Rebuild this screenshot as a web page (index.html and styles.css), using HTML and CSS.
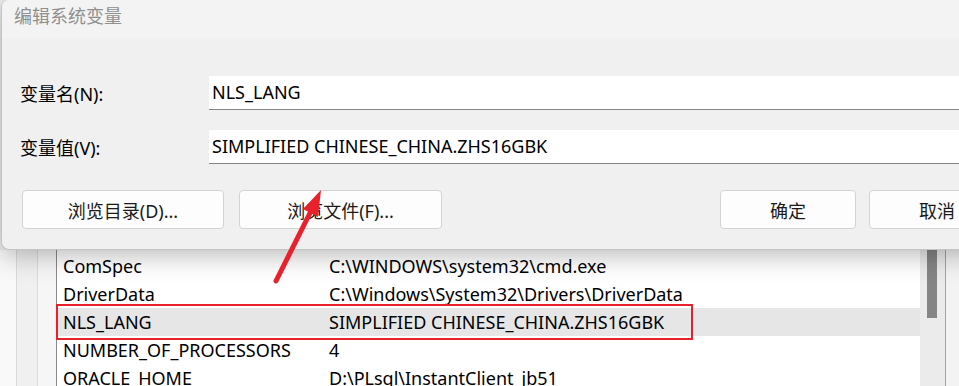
FILE: index.html
```html
<!DOCTYPE html>
<html>
<head>
    <title>编辑系统变量</title>
    <link rel="stylesheet" href="styles.css">
</head>
<body>

<div class="dialog">
    <div class="titlebar">编辑系统变量</div>
    <div class="dialog-body">
        <div class="field-row">
            <label class="field-label">变量名(N):</label>
            <div class="field">NLS_LANG</div>
        </div>
        <div class="field-row">
            <label class="field-label">变量值(V):</label>
            <div class="field">SIMPLIFIED CHINESE_CHINA.ZHS16GBK</div>
        </div>
        <div class="button-row">
            <button class="btn btn-wide">浏览目录(D)...</button>
            <button class="btn btn-wide">浏览文件(F)...</button>
            <span class="spacer"></span>
            <button class="btn">确定</button>
            <button class="btn">取消</button>
        </div>
    </div>
</div>

<div class="backdrop">
    <div class="gutter gutter-a"></div>
    <div class="gutter gutter-b"></div>
    <div class="gutter gutter-c"></div>
    <div class="var-list">
        <div class="var-row"><span class="var-name">ComSpec</span><span>C:\WINDOWS\system32\cmd.exe</span></div>
        <div class="var-row"><span class="var-name">DriverData</span><span>C:\Windows\System32\Drivers\DriverData</span></div>
        <div class="var-row selected">
            <span class="var-name">NLS_LANG</span><span>SIMPLIFIED CHINESE_CHINA.ZHS16GBK</span>
            <div class="mark-box"></div>
        </div>
        <div class="var-row"><span class="var-name">NUMBER_OF_PROCESSORS</span><span>4</span></div>
        <div class="var-row"><span class="var-name">ORACLE_HOME</span><span>D:\PLsql\InstantClient_jb51</span></div>
    </div>
    <div class="scrollbar"><div class="thumb"></div></div>
    <div class="edge"></div>
</div>

<!-- red arrow drawn over the screenshot -->
<svg class="arrow" width="959" height="386" viewBox="0 0 959 386">
    <line x1="276" y1="281" x2="312" y2="209" stroke="#e8212b" stroke-width="5" stroke-linecap="round"/>
    <polygon points="321,190 318,217 303,209" fill="#e8212b"/>
</svg>

</body>
</html>
```

FILE: styles.css
```css
html, body {
    margin: 0;
    width: 959px;
    height: 386px;
    overflow: hidden;
    background-color: #f0f0f0;
    font-family: "Noto Sans", "Noto Sans CJK SC", sans-serif;
    font-size: 18px;
    color: #000;
}

.dialog {
    position: relative;
    z-index: 1;
    width: 1100px;
    height: 250px;
    margin-left: 1px;
    box-sizing: border-box;
    border: 1px solid #c4c4c4;
    border-right: none;
    border-top: none;
    border-radius: 8px 0 0 8px;
    background-color: #f0f0f0;
    box-shadow: 0 4px 28px rgba(0, 0, 0, 0.3);
    overflow: hidden;
}

.titlebar {
    height: 38px;
    line-height: 33px;
    padding-left: 12px;
    background-color: #f3f3f3;
    color: #8f8f8f;
    font-size: 18px;
}

.dialog-body {
    padding: 38px 0 0 18px;
}

.field-row {
    display: flex;
    align-items: center;
    margin-bottom: 20px;
}

.field-label {
    width: 189px;
}

.field {
    flex: 1;
    height: 33px;
    line-height: 33px;
    padding-left: 3px;
    background-color: #fff;
    border-bottom: 1px solid #858585;
}

.button-row {
    display: flex;
    margin-top: 26px;
    margin-left: 2px;
    gap: 15px;
}

.spacer {
    width: 248px;
}

.btn {
    width: 136px;
    height: 39px;
    padding: 0;
    background-color: #fdfdfd;
    border: 1px solid #d3d3d3;
    border-radius: 4px;
    font-family: inherit;
    font-size: 18px;
    color: #1a1a1a;
}

.btn + .btn {
    margin-left: -2px;
}

.btn-wide {
    width: 202px;
}

.btn-wide + .btn-wide {
    width: 203px;
    margin-left: 0;
}

.backdrop {
    display: flex;
    height: 136px;
}

.gutter {
    box-sizing: border-box;
    border-right: 1px solid #dadada;
}

.gutter-a {
    width: 17px;
    background-color: #f9f9f9;
}

.gutter-b {
    width: 21px;
    background-color: #f0f0f0;
}

.gutter-c {
    width: 19px;
    background-color: #f6f6f6;
    border-right-color: #8a8a8a;
}

.var-list {
    width: 863px;
    padding-top: 2px;
    background-color: #fff;
}

.var-row {
    position: relative;
    display: flex;
    height: 28px;
    line-height: 28px;
    padding-left: 6px;
    white-space: nowrap;
}

.var-name {
    width: 266px;
}

.var-row.selected {
    background-color: #e6e6e6;
}

.mark-box {
    position: absolute;
    top: -4px;
    left: -1px;
    width: 637px;
    height: 36px;
    box-sizing: border-box;
    border: 2px solid #e8202a;
}

.scrollbar {
    width: 26px;
    box-sizing: border-box;
    padding-left: 7px;
    background-color: #ebebeb;
    border-right: 1px solid #a3a3a3;
}

.thumb {
    width: 10px;
    height: 68px;
    background-color: #858585;
}

.edge {
    flex: 1;
    background-color: #f3f3f3;
}

.arrow {
    position: absolute;
    top: 0;
    left: 0;
    z-index: 2;
    pointer-events: none;
}
```
